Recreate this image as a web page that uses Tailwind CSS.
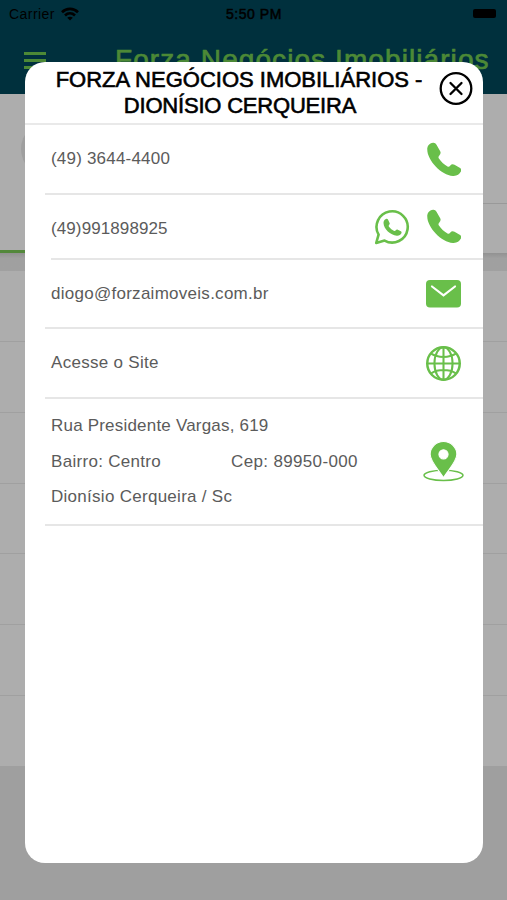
<!DOCTYPE html>
<html lang="pt-BR">
<head>
    <meta charset="UTF-8">
    <meta name="viewport" content="width=device-width, initial-scale=1.0">
    <title>Forza Negócios Imobiliários</title>
    <script src="https://cdn.jsdelivr.net/npm/@tailwindcss/browser@4"></script>
</head>
<body class="relative w-[507px] h-[900px] overflow-hidden bg-[#9f9f9f] font-['Liberation_Sans',Arial,sans-serif]">
    <!-- Page behind the modal -->
    <header class="h-[94px] bg-[#00303d] text-black">
        <div class="grid grid-cols-3 items-center h-7 pl-[9px] pr-[11px] text-[14px]">
            <div class="flex items-center gap-[6px]">
                <span class="tracking-[0.45px]">Carrier</span>
                <svg class="w-[18px] h-[14px]" viewBox="0 0 18 14" fill="none" stroke="#000" stroke-width="2.7">
                    <path d="M1 5.2C5.5.8 12.500.8 17 5.200"/>
                    <path d="M4 8.400c2.900-2.700 7.100-2.700 10 0"/>
                    <path d="M9 13.500 6.200 10.700c1.600-1.400 4-1.400 5.600 0z" fill="#000" stroke="none"/>
                </svg>
            </div>
            <span class="pl-[3px] text-center tracking-[0.55px] whitespace-nowrap [-webkit-text-stroke:0.5px_#000]">5:50 PM</span>
            <div class="justify-self-end mb-px w-[23px] h-[9px] rounded-[2px] bg-black"></div>
        </div>
        <div class="flex items-center h-[64px] pl-6">
            <div class="flex flex-col gap-1 w-[22px]">
                <div class="h-[3px] bg-[#4c8936]"></div>
                <div class="h-[3px] bg-[#4c8936]"></div>
                <div class="h-[3px] bg-[#4c8936]"></div>
            </div>
            <div class="ml-[69px] text-[28px] leading-8 tracking-[1.08px] whitespace-nowrap text-[#4c8936] [-webkit-text-stroke:0.7px_#4c8936]">Forza Negócios Imobiliários</div>
        </div>
    </header>
    <div class="flex flex-col h-[159px] bg-[#adadad]">
        <div class="flex items-center h-[109px] pl-[21px]">
            <div class="w-14 h-14 rounded-full bg-[#9f9f9f]"></div>
        </div>
        <div class="flex flex-1">
            <div class="w-1/2 border-b-[3px] border-[#53883b]"></div>
            <div class="w-1/2 border-t border-[#999]"></div>
        </div>
    </div>
    <div class="h-[18px] bg-linear-to-b from-[#929292] to-[#a0a0a0] to-30%"></div>
    <div class="h-[495px] bg-[#adadad]">
        <div class="h-[71px] border-b border-[#a0a0a0]"></div>
        <div class="h-[71px] border-b border-[#a0a0a0]"></div>
        <div class="h-[71px] border-b border-[#a0a0a0]"></div>
        <div class="h-[70px] border-b border-[#a0a0a0]"></div>
        <div class="h-[71px] border-b border-[#a0a0a0]"></div>
        <div class="h-[71px] border-b border-[#a0a0a0]"></div>
    </div>

    <!-- Contact modal -->
    <div class="absolute left-[25px] top-[62px] w-[458px] h-[801px] rounded-[20px] bg-white text-[#5b5b5b] text-[17px] overflow-hidden">
        <div class="flex justify-between h-[63px] pl-[24px] pr-[9px] border-b-2 border-[#e9e9e9]">
            <h1 class="w-[380px] pt-[5px] text-center text-[22px] leading-[26px] text-black [-webkit-text-stroke:0.6px_#000] whitespace-nowrap">FORZA NEGÓCIOS IMOBILIÁRIOS -<br><span class="pl-[2px] tracking-[-0.2px]">DIONÍSIO CERQUEIRA</span></h1>
            <svg class="mt-[9px] w-[35px] h-[35px]" viewBox="0 0 35 35" fill="none" stroke="#000" stroke-width="2.300">
                <circle cx="17" cy="17.500" r="15.300"/>
                <path d="m11.500 12 11 11M22.500 12l-11 11" stroke-width="2.300" stroke-linecap="round"/>
            </svg>
        </div>
        <div class="ml-[20px] pl-[6px] pr-[22.5px] flex items-center justify-between h-[70px] border-b-2 border-[#e6e6e6]">
            <span class="tracking-[0.2px]">(49) 3644-4400</span>
            <svg class="w-[34px] h-[35px]" viewBox="0 0 34 35" fill="#69bf4a">
                <path d="M.3 6C.7 3 3 1.200 6 .7c1.500-.2 2.700.5 3.500 2l3.700 6.500c.8 1.600.3 2.900-.7 4-1 1-1.400 2-.6 3.300 2.200 3.300 5 6 8.600 8 1.200.6 1.900.2 2.600-.8 1.300-1.500 2.700-1.800 4.400-.9l5.600 3.300c1.300.9 1.400 2.100.8 3.500-1.400 3-4.300 4.600-8 4.300C14 33-.7 17.500.3 6z"/>
            </svg>
        </div>
        <div class="ml-[26px] pr-[22.5px] flex items-center h-[65px] border-b-2 border-[#e6e6e6]">
            <span class="flex-1 pt-[5px] tracking-[0.1px]">(49)991898925</span>
            <svg class="mr-[16.5px] w-[36px] h-[36px]" viewBox="0 0 36 36" fill="none" stroke="#69bf4a" stroke-width="2.600">
                <path d="M2.200 34 4.600 25.700a15.600 15.600 0 1 1 6 5.900z" stroke-linejoin="round"/>
                <path d="M9.500 14c-.1-2 1-3.500 2.500-4.100 1-.3 1.700 0 2.100.9l1.500 3.200c.3.700.1 1.200-.4 1.700-.7.800-.6 1.500 0 2.200 1.300 1.700 2.800 3 4.600 3.900.9.500 1.500.2 2-.6.6-.8 1.200-.9 2-.5l3.100 1.600c.8.500.8 1.100.5 1.900-.7 1.700-2.500 2.700-4.600 2.500C16.500 26.200 9.700 20 9.500 14z" fill="#69bf4a" stroke="none"/>
            </svg>
            <svg class="w-[34px] h-[35px]" viewBox="0 0 34 35" fill="#69bf4a">
                <path d="M.3 6C.7 3 3 1.200 6 .7c1.500-.2 2.700.5 3.500 2l3.700 6.500c.8 1.600.3 2.900-.7 4-1 1-1.400 2-.6 3.300 2.200 3.300 5 6 8.600 8 1.200.6 1.900.2 2.600-.8 1.300-1.500 2.700-1.800 4.400-.9l5.600 3.300c1.300.9 1.400 2.100.8 3.500-1.400 3-4.300 4.600-8 4.300C14 33-.7 17.500.3 6z"/>
            </svg>
        </div>
        <div class="ml-[20px] pl-[6px] pr-[22px] flex items-center justify-between h-[69px] border-b-2 border-[#e6e6e6]">
            <span class="tracking-[0.27px]">diogo@forzaimoveis.com.br</span>
            <svg class="w-[35px] h-[28px]" viewBox="0 0 35 28">
                <rect width="35" height="27.500" rx="4" fill="#69bf4a"/>
                <path d="m6 6.500 11.500 8.800L29 6.500" fill="none" stroke="#fff" stroke-width="2.200" stroke-linecap="round"/>
            </svg>
        </div>
        <div class="ml-[20px] pl-[6px] pr-[22px] flex items-center justify-between h-[70px] border-b-2 border-[#e6e6e6]">
            <span class="tracking-[0.3px]">Acesse o Site</span>
            <svg class="w-[35px] h-[35px]" viewBox="0 0 34 34" fill="none" stroke="#69bf4a" stroke-width="2">
                <circle cx="17" cy="17" r="15.800" stroke-width="2.400"/>
                <ellipse cx="17" cy="17" rx="8.800" ry="15.800"/>
                <path d="M17 1v32M1 17h32M5 7.500c6.500 4.200 17.500 4.200 24 0M5 26.500c6.500-4.200 17.500-4.200 24 0"/>
            </svg>
        </div>
        <div class="ml-[20px] pl-[6px] pr-[19px] flex items-center h-[127px] border-b-2 border-[#e6e6e6] tracking-[0.2px]">
            <div class="flex-1 leading-[35.500px]">
                <p>Rua Presidente Vargas, 619</p>
                <div class="flex">
                    <p class="w-[180px] tracking-[0.3px]">Bairro: Centro</p>
                    <p class="tracking-[0.35px]">Cep: 89950-000</p>
                </div>
                <p class="tracking-[0.28px]">Dionísio Cerqueira / Sc</p>
            </div>
            <svg class="w-[41px] h-[41px]" viewBox="0 0 40 40">
                <ellipse cx="20" cy="33.500" rx="19" ry="5" fill="none" stroke="#69bf4a" stroke-width="1.500"/>
                <path d="M20 36C17 30 7 20.500 7 13a13 12.500 0 0 1 26 0C33 20.500 23 30 20 36zM20 8.500a4.500 4.500 0 1 0 0 9 4.500 4.500 0 0 0 0-9z" fill="#69bf4a" fill-rule="evenodd" stroke="#fff" stroke-width="1"/>
            </svg>
        </div>
    </div>
</body>
</html>
